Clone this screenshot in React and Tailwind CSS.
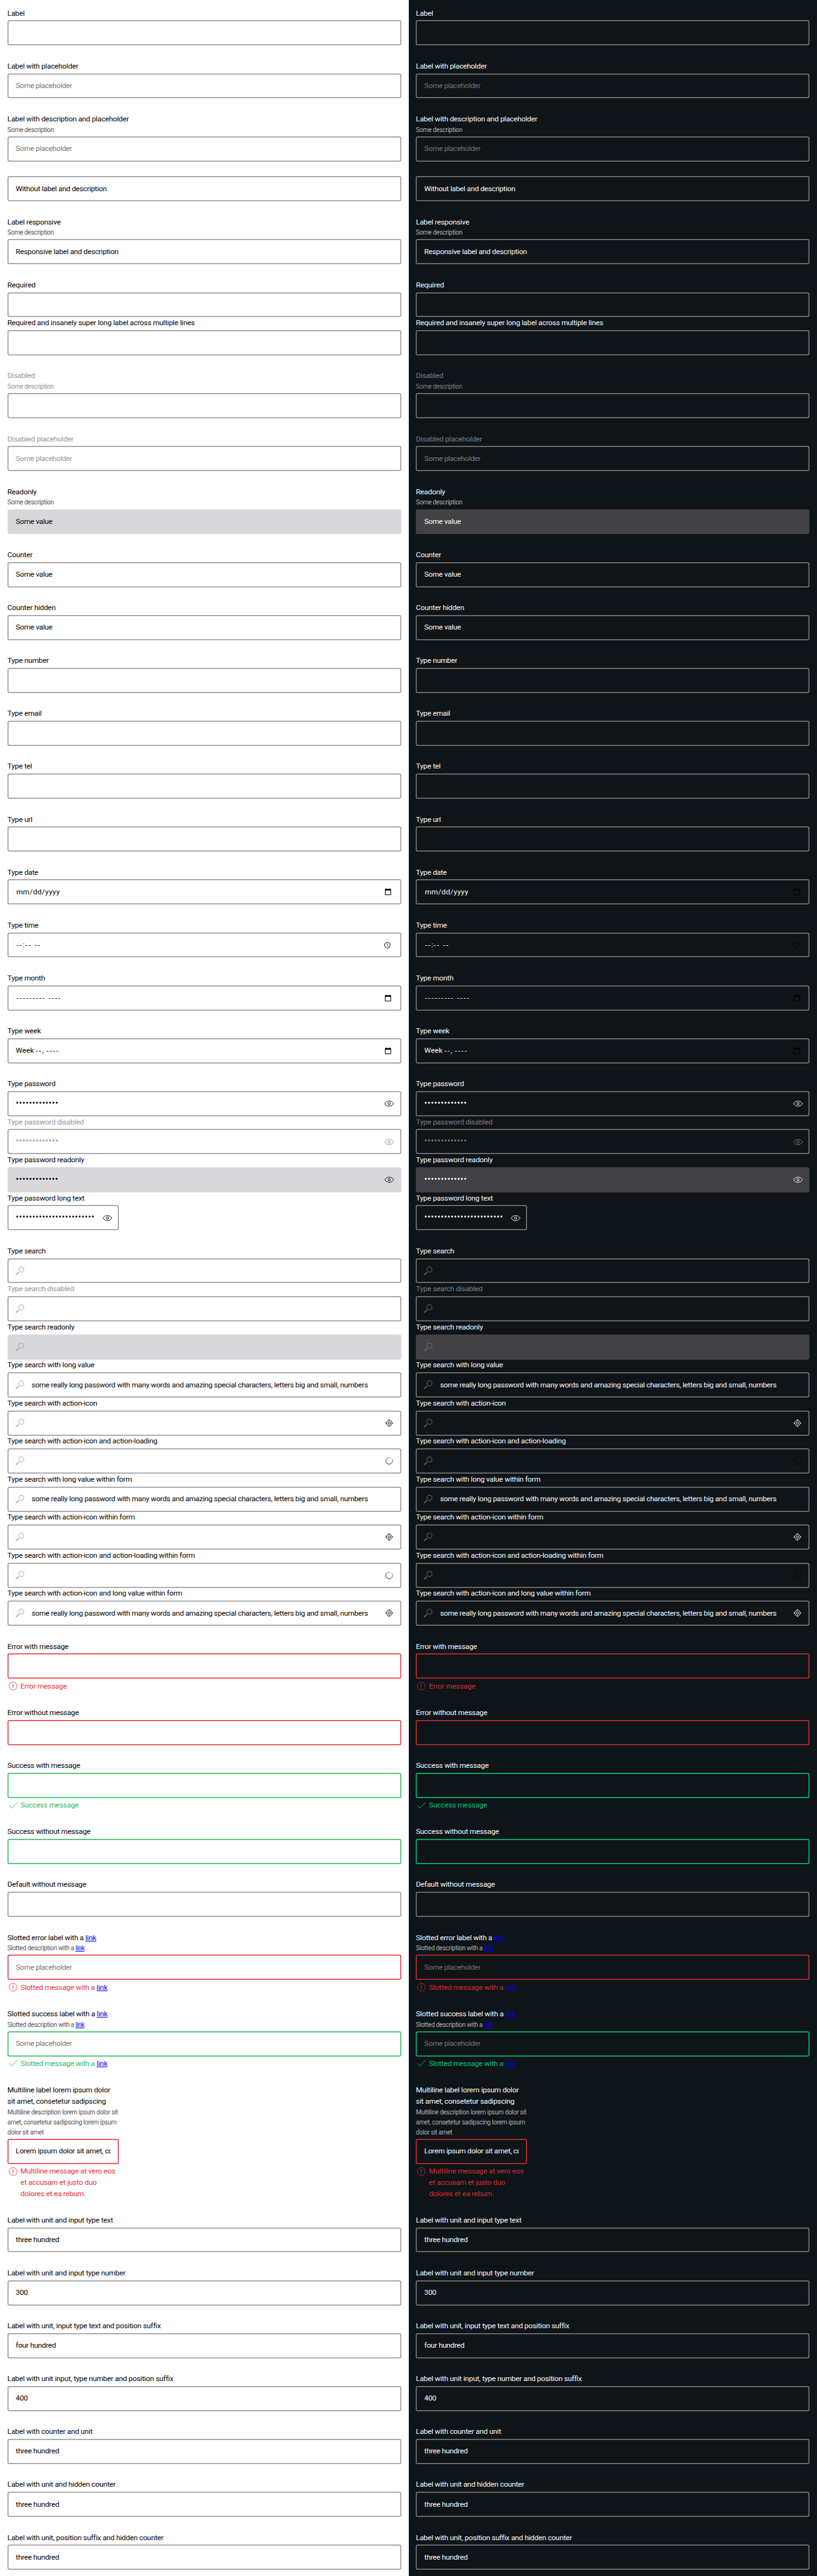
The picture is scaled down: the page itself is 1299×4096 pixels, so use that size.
import React from "react";

const LONG =
  "some really long password with many words and amazing special characters, letters big and small, numbers";

const LIGHT = {
  page: "bg-white text-[#010205]",
  muted: "text-[#535457]",
  disabled: "text-[#949598]",
  placeholder: "text-[#757575]",
  native: "text-black",
  readonly: "bg-[#d8d8db]",
  box: "shadow-[inset_0_0_0_1.5px_#949598]",
  error: "shadow-[inset_0_0_0_1.5px_#ea3039]",
  success: "shadow-[inset_0_0_0_1.5px_#30b65a]",
  errorText: "text-[#ea3039]",
  successText: "text-[#30b65a]",
};

const DARK = {
  page: "bg-[#0e1418] text-[#fbfcff]",
  muted: "text-[#afb0b3]",
  disabled: "text-[#7e7f82]",
  placeholder: "text-[#757575]",
  native: "text-black",
  readonly: "bg-[#424146]",
  box: "shadow-[inset_0_0_0_1.5px_#7e7f82]",
  error: "shadow-[inset_0_0_0_1.5px_#d22f31]",
  success: "shadow-[inset_0_0_0_1.5px_#00c87c]",
  errorText: "text-[#d22f31]",
  successText: "text-[#00c87c]",
};

const icon = "block h-[17.71px] w-[17.71px] shrink-0 overflow-visible";

const Eye = () => (
  <svg viewBox="0 0 24 24" className={icon} fill="none" stroke="currentColor" strokeWidth="1.25">
    <path d="M2.4 12C4.7 8.3 8.2 6.4 12 6.4S19.300 8.300 21.600 12C19.300 15.700 15.800 17.600 12 17.600S4.700 15.700 2.400 12Z" />
    <circle cx="12" cy="12" r="2.4" />
  </svg>
);

const Search = () => (
  <svg viewBox="0 0 24 24" className={icon} fill="none" stroke="currentColor">
    <circle cx="14.700" cy="9" r="5.500" strokeWidth="1.100" />
    <path d="M3.500 20.500L9.200 14.800" strokeWidth="1.900" />
  </svg>
);

const Locate = () => (
  <svg viewBox="0 0 24 24" className={icon} fill="none" stroke="currentColor" strokeWidth="1.300">
    <circle cx="12" cy="12" r="5.900" />
    <circle cx="12" cy="12" r="2.400" />
    <path d="M12 3.500V6M12 18v2.500M3.500 12H6M18 12h2.500" />
  </svg>
);

const Spinner = () => (
  <svg viewBox="0 0 24 24" className={icon} fill="none" stroke="currentColor" strokeWidth="1.200">
    <path d="M12 4.800A7.200 7.200 0 0 1 18.200 8.400" opacity="0.250" />
    <path d="M18.200 8.400A7.200 7.200 0 0 1 18.200 15.600" opacity="0.650" />
    <path d="M18.200 15.600A7.200 7.200 0 0 1 5.800 15.600" opacity="0.950" />
    <path d="M5.800 15.600A7.200 7.200 0 0 1 5.800 8.400" opacity="0.950" />
    <path d="M5.800 8.400A7.200 7.200 0 0 1 12 4.800" opacity="0.700" />
  </svg>
);

const Calendar = () => (
  <svg viewBox="0 0 24 24" className="block h-[11.8px] w-[11.8px] shrink-0" fill="currentColor">
    <path d="M20 3h-1V1h-2v2H7V1H5v2H4c-1.100 0-2 .9-2 2v16c0 1.100.9 2 2 2h16c1.100 0 2-.9 2-2V5c0-1.100-.9-2-2-2zm0 18H4V8h16v13z" />
  </svg>
);

const Clock = () => (
  <svg viewBox="0 0 24 24" className="block h-[11.8px] w-[11.8px] shrink-0" fill="none" stroke="currentColor" strokeWidth="2">
    <circle cx="12" cy="12" r="9" />
    <path d="M11.800 7v5.300l4.200 3.600" strokeWidth="1.600" />
  </svg>
);

const ErrorIcon = () => (
  <svg viewBox="0 0 24 24" className={icon} fill="none" stroke="currentColor">
    <circle cx="12" cy="12" r="8.500" strokeWidth="1.100" />
    <path d="M12 7.500v6M12 14.900v1.700" strokeWidth="1.600" />
  </svg>
);

const CheckIcon = () => (
  <svg viewBox="0 0 24 24" className={icon} fill="none" stroke="currentColor" strokeWidth="1.200">
    <path d="M3.400 11.700L9 17.800L20.700 5.400" />
  </svg>
);

const Dashes = ({ n, className = "" }) => (
  <span className={"font-['Liberation_Sans',sans-serif] tracking-[1.24px] " + className}>{"-".repeat(n)}</span>
);

const Link = () => (
  <a href="#link" className="text-[#0000ee] underline">
    link
  </a>
);

const NATIVE = {
  date: <span className="ml-[0.8px] tracking-[0.35px]">mm/dd/yyyy</span>,
  time: (
    <span className="ml-[0.8px] flex">
      <Dashes n={2} />
      <span className="w-[3.6px]">:</span>
      <Dashes n={2} />
      <Dashes n={2} className="ml-[4.5px]" />
    </span>
  ),
  month: (
    <span className="ml-[0.8px] flex">
      <Dashes n={9} />
      <Dashes n={4} className="ml-[4.5px]" />
    </span>
  ),
  week: (
    <span className="flex">
      <span className="w-[31.6px]">Week</span>
      <Dashes n={2} />
      <span className="w-[6.5px]">,</span>
      <Dashes n={4} />
    </span>
  ),
};

const END = {
  eye: { node: <Eye />, pad: "pr-[9.6px]" },
  locate: { node: <Locate />, pad: "pr-[10.100px]" },
  spinner: { node: <Spinner />, pad: "pr-[10px]" },
  calendar: { node: <Calendar />, pad: "pr-[14.600px]", native: true },
  clock: { node: <Clock />, pad: "pr-[16.200px]", native: true },
};

function Field({ t, label, desc, value, placeholder, native, dots, search, end, state, message, disabled, readonly, narrow }) {
  const frame = readonly ? t.readonly : state === "error" ? t.error : state === "success" ? t.success : t.box;
  const e = end && END[end];
  return (
    <div className={narrow ? "w-[177.1px]" : ""}>
      {(label || desc) && (
        <div className="pb-[2.05px] pt-[0.9px]">
          {label && (
            <div className={"whitespace-nowrap text-[11.81px] leading-[17.72px] tracking-[-0.235px] " + (disabled ? t.disabled : "")}>
              {label}
            </div>
          )}
          {desc && (
            <div className={"whitespace-nowrap text-[10.1px] leading-[16.07px] tracking-[-0.305px] " + (disabled ? t.disabled : t.muted)}>
              {desc}
            </div>
          )}
        </div>
      )}
      <div
        className={
          "flex h-[39.86px] items-center rounded-[3px] pl-[13.3px] text-[11.81px] " + frame + " " + (e ? e.pad : "pr-[13.3px]")
        }
      >
        {search && (
          <span className={"-ml-[2.2px] mr-[9.6px] " + t.disabled}>
            <Search />
          </span>
        )}
        <div
          className={
            "min-w-0 flex-1 overflow-hidden whitespace-nowrap pt-[0.8px] leading-[17.72px] " +
            (dots && narrow ? "mr-[11.700px] " : "") +
            (disabled ? t.disabled : placeholder ? t.placeholder : "")
          }
        >
          {placeholder && <span className="tracking-[-0.335px]">{placeholder}</span>}
          {value && <span className="tracking-[-0.285px]">{value}</span>}
          {dots && <span className="text-[14px] tracking-[0.500px]">{"•".repeat(dots)}</span>}
          {native && NATIVE[native]}
        </div>
        {e && <span className={e.native || end === "spinner" ? t.native : disabled ? t.disabled : ""}>{e.node}</span>}
      </div>
      {message && (
        <div className={"flex gap-[3.1px] pt-[2.95px] " + (state === "error" ? t.errorText : t.successText)}>
          {state === "error" ? <ErrorIcon /> : <CheckIcon />}
          <div className="whitespace-nowrap pt-[0.5px] text-[11.81px] leading-[17.700px] tracking-[-0.2px]">{message}</div>
        </div>
      )}
    </div>
  );
}

const GROUPS = [
  [{ label: "Label" }],
  [{ label: "Label with placeholder", placeholder: "Some placeholder" }],
  [{ label: "Label with description and placeholder", desc: "Some description", placeholder: "Some placeholder" }],
  [{ value: "Without label and description" }],
  [{ label: "Label responsive", desc: "Some description", value: "Responsive label and description" }],
  [{ label: "Required" }, { label: "Required and insanely super long label across multiple lines" }],
  [{ label: "Disabled", desc: "Some description", disabled: true }],
  [{ label: "Disabled placeholder", placeholder: "Some placeholder", disabled: true }],
  [{ label: "Readonly", desc: "Some description", value: "Some value", readonly: true }],
  [{ label: "Counter", value: "Some value" }],
  [{ label: "Counter hidden", value: "Some value" }],
  [{ label: "Type number" }],
  [{ label: "Type email" }],
  [{ label: "Type tel" }],
  [{ label: "Type url" }],
  [{ label: "Type date", native: "date", end: "calendar" }],
  [{ label: "Type time", native: "time", end: "clock" }],
  [{ label: "Type month", native: "month", end: "calendar" }],
  [{ label: "Type week", native: "week", end: "calendar" }],
  [
    { label: "Type password", dots: 13, end: "eye" },
    { label: "Type password disabled", dots: 13, end: "eye", disabled: true },
    { label: "Type password readonly", dots: 13, end: "eye", readonly: true },
    { label: "Type password long text", dots: 26, end: "eye", narrow: true },
  ],
  [
    { label: "Type search", search: true },
    { label: "Type search disabled", search: true, disabled: true },
    { label: "Type search readonly", search: true, readonly: true },
    { label: "Type search with long value", search: true, value: LONG },
    { label: "Type search with action-icon", search: true, end: "locate" },
    { label: "Type search with action-icon and action-loading", search: true, end: "spinner" },
    { label: "Type search with long value within form", search: true, value: LONG },
    { label: "Type search with action-icon within form", search: true, end: "locate" },
    { label: "Type search with action-icon and action-loading within form", search: true, end: "spinner" },
    { label: "Type search with action-icon and long value within form", search: true, value: LONG, end: "locate" },
  ],
  [{ label: "Error with message", state: "error", message: "Error message" }],
  [{ label: "Error without message", state: "error" }],
  [{ label: "Success with message", state: "success", message: "Success message" }],
  [{ label: "Success without message", state: "success" }],
  [{ label: "Default without message" }],
  [
    {
      label: <>Slotted error label with a <Link /></>,
      desc: <>Slotted description with a <Link /></>,
      placeholder: "Some placeholder",
      state: "error",
      message: <>Slotted message with a <Link /></>,
    },
  ],
  [
    {
      label: <>Slotted success label with a <Link /></>,
      desc: <>Slotted description with a <Link /></>,
      placeholder: "Some placeholder",
      state: "success",
      message: <>Slotted message with a <Link /></>,
    },
  ],
  [
    {
      label: <>Multiline label lorem ipsum dolor<br />sit amet, consetetur sadipscing</>,
      desc: <>Multiline description lorem ipsum dolor sit<br />amet, consetetur sadipscing lorem ipsum<br />dolor sit amet</>,
      value: "Lorem ipsum dolor sit amet, consetetur",
      state: "error",
      narrow: true,
      message: <>Multiline message at vero eos<br />et accusam et justo duo<br />dolores et ea rebum.</>,
    },
  ],
  [{ label: "Label with unit and input type text", value: "three hundred" }],
  [{ label: "Label with unit and input type number", value: "300" }],
  [{ label: "Label with unit, input type text and position suffix", value: "four hundred" }],
  [{ label: "Label with unit input, type number and position suffix", value: "400" }],
  [{ label: "Label with counter and unit", value: "three hundred" }],
  [{ label: "Label with unit and hidden counter", value: "three hundred" }],
  [{ label: "Label with unit, position suffix and hidden counter", value: "three hundred" }],
];

function Column({ t }) {
  return (
    <div className={"flex h-[4096px] w-1/2 flex-col gap-[23.62px] overflow-hidden p-[11.81px] " + t.page}>
      {GROUPS.map((g, i) => (
        <div key={i}>
          {g.map((f, j) => (
            <Field key={j} t={t} {...f} />
          ))}
        </div>
      ))}
    </div>
  );
}

export default function App() {
  return (
    <div className="flex w-full font-['Roboto','Liberation_Sans',sans-serif]">
      <Column t={LIGHT} />
      <Column t={DARK} />
    </div>
  );
}
